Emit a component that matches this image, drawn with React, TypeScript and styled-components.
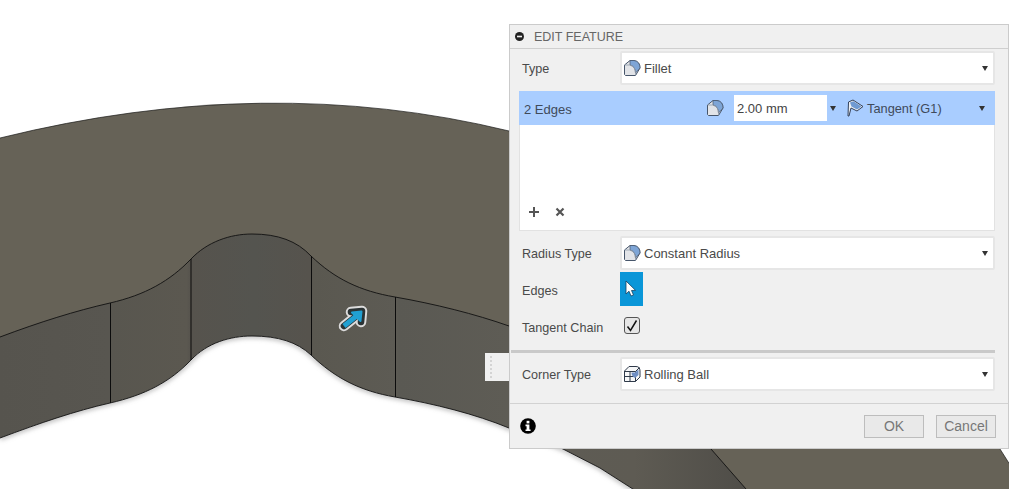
import React from "react";
import styled, { createGlobalStyle } from "styled-components";

const Global = createGlobalStyle`
  html, body { margin: 0; padding: 0; background: #fff; overflow: hidden; }
  body { font-family: "Liberation Sans", Arial, sans-serif; }
`;

const Stage = styled.div`
  position: relative;
  width: 1009px;
  height: 489px;
  overflow: hidden;
  background: #fff;
`;

const Model = styled.svg`
  position: absolute;
  inset: 0;
  display: block;
`;

const Panel = styled.section`
  position: absolute;
  left: 509px;
  top: 24px;
  width: 500px;
  height: 425px;
  box-sizing: border-box;
  display: flex;
  flex-direction: column;
  background: #f0f0f0;
  border: 1px solid #cbcbcb;
  color: #444;
  font-size: 13px;
`;

const Grip = styled.div`
  position: absolute;
  left: -25px;
  top: 328px;
  width: 24px;
  height: 28px;
  background: #f0f0f0;
  &::after {
    content: "";
    position: absolute;
    left: 5px;
    top: 3px;
    bottom: 3px;
    width: 2px;
    background: repeating-linear-gradient(#d4d4d4 0 2px, transparent 2px 4px);
  }
`;

const Header = styled.header`
  height: 24px;
  box-sizing: border-box;
  display: flex;
  align-items: center;
  gap: 10px;
  padding-left: 5px;
  border-bottom: 1px solid #cfcfcf;
  color: #666;
  font-size: 12.5px;
`;

const Row = styled.div<{ $mt?: number; $h?: number }>`
  display: grid;
  grid-template-columns: 98px 375px;
  align-items: center;
  padding-left: 12px;
  margin-top: ${(p) => p.$mt ?? 0}px;
  height: ${(p) => p.$h ?? 34}px;
`;

const Label = styled.span<{ $dy?: number }>`
  padding-top: ${(p) => p.$dy ?? 2}px;
  color: #4a4a4a;
  font-size: 12.6px;
`;

const Value = styled.span`
  white-space: nowrap;
`;

const Select = styled.div`
  height: 34px;
  box-sizing: border-box;
  display: flex;
  align-items: center;
  gap: 3px;
  padding: 0 5px 0 1px;
  background: #fff;
  border: 2px solid #e6e6e6;
  border-radius: 2px;
  color: #4a4a4a;
`;

const Caret = styled.i`
  display: block;
  width: 0;
  height: 0;
  margin-left: auto;
  border-left: 3.5px solid transparent;
  border-right: 3.5px solid transparent;
  border-top: 5px solid #333;
`;

const EdgeTable = styled.div`
  margin: 6px 0 0 9px;
  width: 476px;
  height: 140px;
  box-sizing: border-box;
  display: flex;
  flex-direction: column;
  background: #fff;
  border: 1px solid #e2e2e2;
  border-top: 0;
`;

const EdgeRow = styled.div`
  height: 34px;
  flex: none;
  display: flex;
  align-items: center;
  margin: 0 -1px;
  padding-left: 5px;
  background: #a9cdff;
  color: #3f4a5a;
`;

const EdgeCount = styled.span`
  width: 182px;
  padding-top: 2px;
`;

const ValueInput = styled.span`
  width: 93px;
  height: 26px;
  box-sizing: border-box;
  display: flex;
  align-items: center;
  margin-left: 10px;
  padding: 1px 0 0 3px;
  background: #fff;
  color: #444;
`;

const SmallCaret = styled(Caret)`
  margin: 0 10px 0 3px;
`;

const Continuity = styled.span`
  display: flex;
  align-items: center;
  gap: 3px;
  flex: 1;
  padding-right: 10px;
  font-size: 12.8px;
`;

const TableTools = styled.div`
  margin-top: auto;
  height: 38px;
  box-sizing: border-box;
  display: flex;
  align-items: center;
  gap: 14px;
  padding: 2px 0 0 8px;
`;

const PickButton = styled.div`
  width: 23px;
  height: 34px;
  display: flex;
  align-items: center;
  justify-content: center;
  background: #0a96d8;
`;

const Check = styled.div`
  width: 16px;
  height: 17px;
  margin: -3px 0 0 4px;
  box-sizing: border-box;
  display: flex;
  align-items: center;
  justify-content: center;
  background: #e6e6e6;
  border: 1px solid #555;
  border-radius: 3px;
`;

const Divider = styled.hr`
  margin: 4px 13px 0 1px;
  height: 3px;
  border: 0;
  background: #c9c9c9;
`;

const Footer = styled.footer`
  margin-top: 12px;
  flex: 1;
  display: flex;
  align-items: center;
  padding: 0 12px 0 10px;
  border-top: 1px solid #d2d2d2;
`;

const Buttons = styled.div`
  margin-left: auto;
  display: flex;
  gap: 12px;
`;

const Btn = styled.button`
  width: 60px;
  height: 23px;
  padding: 0;
  background: #e9e9e9;
  border: 1px solid #bdbdbd;
  color: #777;
  font: 14px "Liberation Sans", Arial, sans-serif;
`;

const FilletIcon = () => (
  <svg width="18" height="18" viewBox="0 0 18 18">
    <path d="M1.5 6 L7 1.5 H11 Q17 2.5 17 9 L12.5 16.5 H2.5 L1.5 15.5 Z" fill="#e2e4e8" stroke="#47566b" strokeWidth="1" />
    <path d="M7 1.5 H11 Q17 2.5 17 9 L12.5 14 Q12.5 7.5 7 6 Z" fill="#7ea5d6" stroke="#47566b" strokeWidth="0.7" />
    <path d="M1.5 6 H7 Q12.5 7.5 12.5 14 V16.5" fill="none" stroke="#8d99a8" strokeWidth="0.8" />
  </svg>
);

const TangentIcon = () => (
  <svg width="18" height="18" viewBox="0 0 18 18">
    <path d="M2 17 L2.5 3 L7 1 L17 7.5 L11 12 L5 9 L3 17 Z" fill="#eef0f3" stroke="#33415a" strokeWidth="1" />
    <path d="M4 3.5 L7.5 2.2 L15.5 7.5 L11 10.5 L5.5 7.5 Z" fill="#6f9ad2" />
  </svg>
);

const RollingIcon = () => (
  <svg width="18" height="18" viewBox="0 0 18 18">
    <path d="M1.5 6 L6 1.5 H13 Q17 1.5 17 6 V12 L12.5 16.5 H1.5 Z" fill="#f6f7f8" stroke="#2f3a4a" strokeWidth="1" />
    <path d="M1.5 6.5 H12.5 V16.5 M12.5 6.5 L16.5 2.5 M1.5 11.5 H12.5 M7 6.5 V16.5" fill="none" stroke="#2f3a4a" strokeWidth="1" />
    <path d="M8.5 7.5 H12 L15.5 4.5 V10 L12 13 Q8.5 11 8.5 7.5 Z" fill="#6f8fc4" />
  </svg>
);

const Minus = () => (
  <svg width="9" height="9" viewBox="0 0 9 9">
    <circle cx="4.5" cy="4.5" r="4.5" fill="#222" />
    <rect x="2" y="3.7" width="5" height="1.6" fill="#f0f0f0" />
  </svg>
);

const Plus = () => (
  <svg width="12" height="12" viewBox="0 0 12 12">
    <path d="M6 1 V11 M1 6 H11" stroke="#555" strokeWidth="2" />
  </svg>
);

const Cross = () => (
  <svg width="12" height="12" viewBox="0 0 12 12">
    <path d="M2.5 2.5 L9.5 9.5 M9.5 2.5 L2.5 9.5" stroke="#555" strokeWidth="2.2" />
  </svg>
);

const Cursor = () => (
  <svg width="13" height="18" viewBox="0 0 13 18">
    <path d="M1 1 V14 L4 11.2 L6 16 L8.5 15 L6.5 10.5 L10.5 10.3 Z" fill="#fff" stroke="#14405f" strokeWidth="0.8" />
  </svg>
);

const Tick = () => (
  <svg width="14" height="14" viewBox="0 0 14 14">
    <path d="M2.5 7.5 L5.5 11.5 L11.5 1.5" fill="none" stroke="#111" strokeWidth="1.5" />
  </svg>
);

const Info = () => (
  <svg width="16" height="16" viewBox="0 0 16 16">
    <circle cx="8" cy="8" r="7.8" fill="#000" />
    <rect x="6.6" y="2.8" width="2.8" height="2.6" fill="#fff" />
    <path d="M5.5 6.6 H9.4 V11.4 H10.6 V13 H5.5 V11.4 H6.6 V8.2 H5.5 Z" fill="#fff" />
  </svg>
);

const topArc = "M0 337 C40 322 75 311 110 303 C145 295 170 281 191 259 C207 242 230 234 252 234 C278 234 297 241 311 256 C335 279 360 291 395 297 C435 304 475 314 509 326 C600 355 670 400 711 449 L746 489";
const bottomEdge = "M0 438 C40 423 75 411 110 403 C145 395 170 382 191 360 C207 343 230 336 252 336 C278 336 297 342 311 355 C335 378 360 391 395 397 C435 404 475 414 509 428 L563 449 L600 468 L636 491";

const ModelView = () => (
  <Model width="1009" height="489" viewBox="0 0 1009 489">
    <defs>
      <linearGradient id="side" gradientUnits="userSpaceOnUse" x1="0" y1="0" x2="746" y2="0">
        <stop offset="0" stopColor="#56544e" />
        <stop offset="0.147" stopColor="#585650" />
        <stop offset="0.148" stopColor="#58564f" />
        <stop offset="0.25" stopColor="#5b5850" />
        <stop offset="0.256" stopColor="#56534d" />
        <stop offset="0.34" stopColor="#54544f" />
        <stop offset="0.415" stopColor="#56534d" />
        <stop offset="0.42" stopColor="#5a5850" />
        <stop offset="0.53" stopColor="#5d5b54" />
        <stop offset="0.535" stopColor="#5a5953" />
        <stop offset="0.68" stopColor="#5e5c55" />
        <stop offset="0.85" stopColor="#5e5b53" />
        <stop offset="1" stopColor="#4f4d48" />
      </linearGradient>
      <clipPath id="below">
        <path d={`${bottomEdge} L0 491 Z`} />
      </clipPath>
      <filter id="soft" x="-5%" y="-20%" width="110%" height="140%">
        <feGaussianBlur stdDeviation="2.5" />
      </filter>
    </defs>
    <path d="M0 138 Q267 72 509 131 L1000 449 L1012 468 V489 H0 Z" fill="#666257" />
    <path d="M0 138 Q267 72 509 131 M1000 449 L1012 468" fill="none" stroke="#1a1a18" strokeWidth="0.7" />
    <path d={`${topArc} L636 491 L600 468 L563 449 L509 428 C475 414 435 404 395 397 C360 391 335 378 311 355 C297 342 278 336 252 336 C230 336 207 343 191 360 C170 382 145 395 110 403 C75 411 40 423 0 438 Z`} fill="url(#side)" />
    <path d={`${bottomEdge} L0 491 Z`} fill="#fff" />
    <g clipPath="url(#below)">
      <path d={bottomEdge} fill="none" stroke="#9a9a9a" strokeWidth="3" filter="url(#soft)" />
    </g>
    <path d={bottomEdge} fill="none" stroke="#111" strokeWidth="0.9" />
    <path d={topArc} fill="none" stroke="#111" strokeWidth="0.9" />
    <path d="M110.5 303 V403 M191 259 V360 M311.5 256 V355 M395.5 297 V397" stroke="#0c0c0c" strokeWidth="1" />
    <g strokeLinejoin="round" strokeLinecap="round" fill="none">
      <path d="M344 326 L359 314 M351 312 L362 311 L361 322" stroke="#dcdcdc" strokeWidth="10.5" />
      <path d="M344 326 L359 314 M351 312 L362 311 L361 322" stroke="#2b3335" strokeWidth="6.6" />
      <path d="M344 326 L359 314" stroke="#21a0d2" strokeWidth="5" strokeLinecap="butt" />
      <path d="M352 312.5 L361.5 311.5 L360.5 321 Z" fill="#21a0d2" stroke="#21a0d2" strokeWidth="2" />
    </g>
  </Model>
);

export default function App() {
  return (
    <Stage>
      <Global />
      <ModelView />
      <Panel>
        <Grip />
        <Header>
          <Minus />
          <span>EDIT FEATURE</span>
        </Header>
        <Row $mt={2}>
          <Label>Type</Label>
          <Select>
            <FilletIcon />
            <Value>Fillet</Value>
            <Caret />
          </Select>
        </Row>
        <EdgeTable>
          <EdgeRow>
            <EdgeCount>2 Edges</EdgeCount>
            <FilletIcon />
            <ValueInput>2.00 mm</ValueInput>
            <SmallCaret />
            <Continuity>
              <TangentIcon />
              <Value>Tangent (G1)</Value>
              <Caret />
            </Continuity>
          </EdgeRow>
          <TableTools>
            <Plus />
            <Cross />
          </TableTools>
        </EdgeTable>
        <Row $mt={5}>
          <Label>Radius Type</Label>
          <Select>
            <FilletIcon />
            <Value>Constant Radius</Value>
            <Caret />
          </Select>
        </Row>
        <Row $mt={2}>
          <Label $dy={4}>Edges</Label>
          <PickButton>
            <Cursor />
          </PickButton>
        </Row>
        <Row $mt={2} $h={38}>
          <Label>Tangent Chain</Label>
          <Check>
            <Tick />
          </Check>
        </Row>
        <Divider />
        <Row $mt={4}>
          <Label>Corner Type</Label>
          <Select>
            <RollingIcon />
            <Value>Rolling Ball</Value>
            <Caret />
          </Select>
        </Row>
        <Footer>
          <Info />
          <Buttons>
            <Btn>OK</Btn>
            <Btn>Cancel</Btn>
          </Buttons>
        </Footer>
      </Panel>
    </Stage>
  );
}
